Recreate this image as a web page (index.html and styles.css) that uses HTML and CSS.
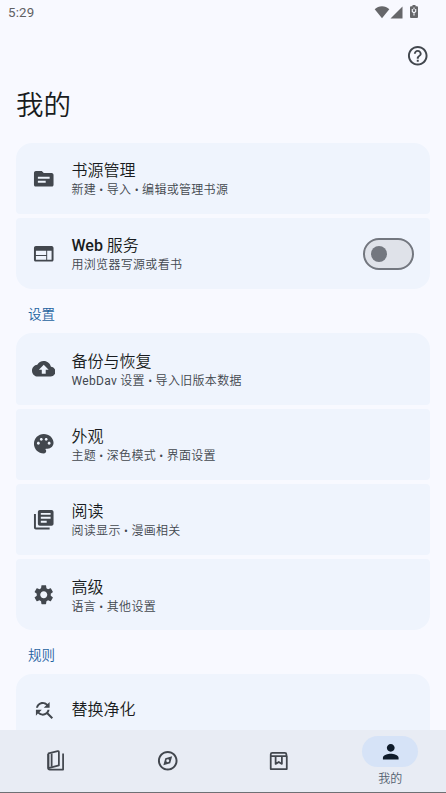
FILE: index.html
```html
<!DOCTYPE html>
<html lang="zh-CN">
<head>
<meta charset="utf-8">
<title>我的</title>
<link rel="stylesheet" href="styles.css">
</head>
<body>
<div class="app">
  <header class="status">
    <span class="time">5:29</span>
    <div class="status-icons">
      <svg class="wifi" viewBox="0 0 16 14"><path d="M8 13.3.7 4.2C2.7 2.3 5.2 1.2 8 1.2s5.300 1.100 7.300 3z"/></svg>
      <svg class="signal" viewBox="0 0 13 13"><path d="M12.500.5v12H.5z"/></svg>
      <svg class="battery" viewBox="0 0 8 13"><path d="M2.500 0h3v1.200H7q1 0 1 1V12q0 1-1 1H1q-1 0-1-1V2.200q0-1 1-1h1.500z"/><path class="bolt" d="M4 8v2.500M4 2.500v2M2.300 4v2.500L4 8l1.700-1.500V4"/></svg>
    </div>
  </header>
  <div class="toolbar">
    <svg class="icon help" viewBox="0 0 24 24"><path d="M11 18h2v-2h-2v2zm1-16C6.480 2 2 6.480 2 12s4.480 10 10 10 10-4.480 10-10S17.520 2 12 2zm0 18c-4.410 0-8-3.590-8-8s3.590-8 8-8 8 3.590 8 8-3.590 8-8 8zm0-14c-2.210 0-4 1.790-4 4h2c0-1.100.9-2 2-2s2 .9 2 2c0 2-3 1.750-3 5h2c0-2.250 3-2.500 3-5 0-2.210-1.790-4-4-4z"/></svg>
  </div>
  <h1>我的</h1>
  <main>
    <section class="group">
      <div class="card">
        <svg class="icon" viewBox="0 0 24 24"><path d="M20 6h-8l-2-2H4c-1.100 0-1.990.9-1.990 2L2 18c0 1.100.9 2 2 2h16c1.100 0 2-.9 2-2V8c0-1.100-.9-2-2-2zm-6 10H6v-2h8v2zm4-4H6v-2h12v2z"/></svg>
        <div class="text"><div class="title">书源管理</div><div class="sub">新建 • 导入 • 编辑或管理书源</div></div>
      </div>
      <div class="card">
        <svg class="icon" viewBox="0 0 24 24"><path d="M20 4H4c-1.100 0-1.990.9-1.990 2L2 18c0 1.100.9 2 2 2h16c1.100 0 2-.9 2-2V6c0-1.100-.9-2-2-2zm-5.500 14H4v-3.750h10.500V18zm0-4.750H4V9h10.500v4.250zM20 18h-4.500V9H20v9z"/></svg>
        <div class="text"><div class="title"><span class="latin">Web</span> 服务</div><div class="sub">用浏览器写源或看书</div></div>
        <div class="switch"><div class="thumb"></div></div>
      </div>
    </section>
    <h2>设置</h2>
    <section class="group">
      <div class="card">
        <svg class="icon" viewBox="0 0 24 24"><path d="M19.350 10.040C18.670 6.590 15.640 4 12 4 9.110 4 6.600 5.640 5.350 8.040 2.340 8.360 0 10.910 0 14c0 3.310 2.690 6 6 6h13c2.760 0 5-2.240 5-5 0-2.640-2.050-4.780-4.650-4.960zM14 13v4h-4v-4H7l5-5 5 5h-3z"/></svg>
        <div class="text"><div class="title">备份与恢复</div><div class="sub"><span class="latin-regular">WebDav</span> 设置 • 导入旧版本数据</div></div>
      </div>
      <div class="card">
        <svg class="icon" viewBox="0 0 24 24"><path d="M12 2C6.490 2 2 6.490 2 12s4.490 10 10 10c1.380 0 2.500-1.120 2.500-2.500 0-.61-.23-1.200-.64-1.670-.08-.1-.13-.21-.13-.33 0-.28.22-.5.5-.5H16c3.310 0 6-2.690 6-6 0-4.960-4.490-9-10-9zm5.500 11c-.83 0-1.500-.67-1.500-1.500s.67-1.500 1.500-1.500 1.500.67 1.500 1.500-.67 1.500-1.500 1.500zm-3-4c-.83 0-1.500-.67-1.500-1.500S13.670 6 14.500 6s1.500.67 1.500 1.500S15.330 9 14.500 9zM5 11.500c0-.83.67-1.500 1.500-1.500s1.500.67 1.500 1.500S7.330 13 6.500 13 5 12.330 5 11.500zm6-4c0 .83-.67 1.500-1.500 1.500S8 8.330 8 7.500 8.670 6 9.500 6s1.500.67 1.500 1.500z"/></svg>
        <div class="text"><div class="title">外观</div><div class="sub">主题 • 深色模式 • 界面设置</div></div>
      </div>
      <div class="card">
        <svg class="icon" viewBox="0 0 24 24"><path d="M4 6H2v14c0 1.100.9 2 2 2h14v-2H4V6zm16-4H8c-1.100 0-2 .9-2 2v12c0 1.100.9 2 2 2h12c1.100 0 2-.9 2-2V4c0-1.100-.9-2-2-2zm-1 9H9V9h10v2zm-4 4H9v-2h6v2zm4-8H9V5h10v2z"/></svg>
        <div class="text"><div class="title">阅读</div><div class="sub">阅读显示 • 漫画相关</div></div>
      </div>
      <div class="card">
        <svg class="icon" viewBox="0 0 24 24"><path d="M19.140 12.940c.04-.3.06-.61.06-.94 0-.32-.02-.64-.07-.94l2.030-1.580c.18-.14.23-.41.12-.61l-1.920-3.320c-.12-.22-.37-.29-.59-.22l-2.390.96c-.5-.38-1.030-.7-1.620-.94l-.36-2.540c-.04-.24-.24-.41-.48-.41h-3.840c-.24 0-.43.17-.47.41l-.36 2.540c-.59.24-1.130.57-1.620.94l-2.390-.96c-.22-.08-.47 0-.59.22L2.740 8.870c-.12.21-.08.47.12.61l2.030 1.580c-.05.3-.09.63-.09.94s.02.64.07.94l-2.030 1.580c-.18.14-.23.41-.12.61l1.920 3.320c.12.22.37.29.59.22l2.390-.96c.5.38 1.030.7 1.620.94l.36 2.540c.05.24.24.41.48.41h3.840c.24 0 .44-.17.47-.41l.36-2.540c.59-.24 1.130-.56 1.620-.94l2.390.96c.22.08.47 0 .59-.22l1.920-3.320c.12-.22.07-.47-.12-.61l-2.010-1.580zM12 15.600c-1.980 0-3.600-1.620-3.600-3.600s1.620-3.600 3.600-3.600 3.600 1.620 3.600 3.600-1.620 3.600-3.600 3.600z"/></svg>
        <div class="text"><div class="title">高级</div><div class="sub">语言 • 其他设置</div></div>
      </div>
    </section>
    <h2>规则</h2>
    <section class="group">
      <div class="card">
        <svg class="icon" viewBox="0 0 24 24"><path d="M11 6c1.380 0 2.630.56 3.540 1.460L12 10h6V4l-2.050 2.050C14.680 4.780 12.930 4 11 4c-3.530 0-6.430 2.610-6.920 6H6.100c.46-2.280 2.480-4 4.900-4zm5.640 9.140c.66-.9 1.120-1.970 1.280-3.140H15.900c-.46 2.280-2.480 4-4.900 4-1.380 0-2.630-.56-3.540-1.460L10 12H4v6l2.050-2.050C7.320 17.220 9.070 18 11 18c1.550 0 2.980-.51 4.140-1.360L20 21.490 21.490 20l-4.850-4.860z"/></svg>
        <div class="text single"><div class="title">替换净化</div></div>
      </div>
    </section>
  </main>
  <nav>
    <div class="tab">
      <svg class="icon" viewBox="0 0 24 24"><path d="M4.600 4.500 14 2.200Q15.200 2 15.200 3.200V16.800L4.600 19.500z" class="line"/><path class="line" d="M7.800 4.500v13.500M4.200 5v14.200Q4.200 21 6 21H19.500V4.500"/></svg>
    </div>
    <div class="tab">
      <svg class="icon" viewBox="0 0 24 24"><path d="M12 2C6.480 2 2 6.480 2 12s4.480 10 10 10 10-4.480 10-10S17.520 2 12 2zm0 18c-4.410 0-8-3.590-8-8s3.590-8 8-8 8 3.590 8 8-3.590 8-8 8z"/><path fill-rule="evenodd" d="m7.500 16.500 2-7 7-2-2 7zM12 10.500a1.500 1.500 0 1 0 0 3 1.500 1.500 0 0 0 0-3z"/></svg>
    </div>
    <div class="tab">
      <svg class="icon" viewBox="0 0 24 24"><path class="line" d="M3.800 7V5.600Q3.800 4 5.400 4H18.200Q19.800 4 19.800 5.600V7M3.800 7.200H20.200V20.500H3.800zM8.800 8v7.200l3.200-2 3.200 2V8"/></svg>
    </div>
    <div class="tab active">
      <div class="pill"><svg class="icon" viewBox="0 0 24 24"><path d="M12 12c2.210 0 4-1.790 4-4s-1.790-4-4-4-4 1.790-4 4 1.790 4 4 4zm0 2c-2.670 0-8 1.340-8 4v2h16v-2c0-2.660-5.330-4-8-4z"/></svg></div>
      <span class="tab-label">我的</span>
    </div>
  </nav>
</div>
</body>
</html>
```
FILE: styles.css
```css
* { box-sizing: border-box; }

body {
  margin: 0;
  background: #f8f9ff;
  color: #191c20;
  font-family: Roboto, "Noto Sans CJK SC", sans-serif;
  font-weight: 350;
}

.app {
  display: flex;
  flex-direction: column;
  height: 793px;
  overflow: hidden;
}

.status {
  display: flex;
  justify-content: space-between;
  height: 28px;
  flex: none;
  padding: 5px 28px 0 8px;
  color: #5f6063;
}

.time { font-size: 13.3px; font-weight: 400; line-height: 16px; letter-spacing: .2px; }

.status-icons { display: flex; align-items: flex-start; fill: #66676a; }
.wifi { width: 16px; height: 14px; }
.signal { width: 13px; height: 13px; margin: 0.5px 7px 0 0; }
.battery { width: 8px; height: 13px; }
.bolt { fill: none; stroke: #f8f9ff; stroke-width: 1.1; }

.icon { width: 23.5px; height: 23.5px; fill: #42474e; flex: none; display: block; }
.line { fill: none; stroke: #42474e; stroke-width: 1.8; stroke-linejoin: round; }

.toolbar {
  display: flex;
  justify-content: flex-end;
  align-items: center;
  height: 55px;
  flex: none;
  padding-right: 16.5px;
}

h1 {
  flex: none;
  margin: 0;
  padding-left: 16px;
  height: 59.7px;
  font-size: 27.5px;
  font-weight: 350;
  line-height: 46px;
}

main { flex: 1; min-height: 0; overflow: hidden; padding: 0 16px; }

.group {
  display: flex;
  flex-direction: column;
  gap: 4px;
  border-radius: 16px;
  overflow: hidden;
}

.card {
  display: flex;
  align-items: center;
  height: 71.3px;
  padding: 0 16px 0 15.5px;
  gap: 16.5px;
  border-radius: 4px;
  background: #eff4fd;
}

.text { flex: 1; padding-top: 2.6px; }
.single { padding-top: 0; }
.title { font-size: 16px; line-height: 22px; }
.latin { font-weight: 500; }
.latin-regular { font-weight: 400; }
.sub { font-size: 12px; line-height: 17px; letter-spacing: .31px; color: #42474e; }

.switch {
  display: flex;
  align-items: center;
  width: 51.5px;
  height: 32px;
  padding-left: 6px;
  border: 2px solid #73777f;
  border-radius: 16px;
  background: #dfe2e9;
}
.thumb { width: 16px; height: 16px; border-radius: 50%; background: #73777f; }

h2 {
  margin: 0;
  padding-left: 12px;
  height: 44px;
  font-size: 13.5px;
  font-weight: 350;
  line-height: 50px;
  color: #1f639f;
}

nav {
  display: flex;
  flex: none;
  height: 63.5px;
  background: #e8ecf4;
  border-bottom: 1px solid #6e7074;
}
.tab { flex: 1; display: flex; flex-direction: column; align-items: center; justify-content: center; }
.active { justify-content: flex-start; padding-top: 6px; }
.pill {
  display: flex;
  align-items: center;
  justify-content: center;
  width: 56px;
  height: 31.5px;
  border-radius: 16px;
  background: #d6e3f7;
}
.pill .icon { fill: #0f1c2b; }
.tab-label { margin-top: 4.5px; font-size: 12px; line-height: 14px; color: #53606f; }
```
